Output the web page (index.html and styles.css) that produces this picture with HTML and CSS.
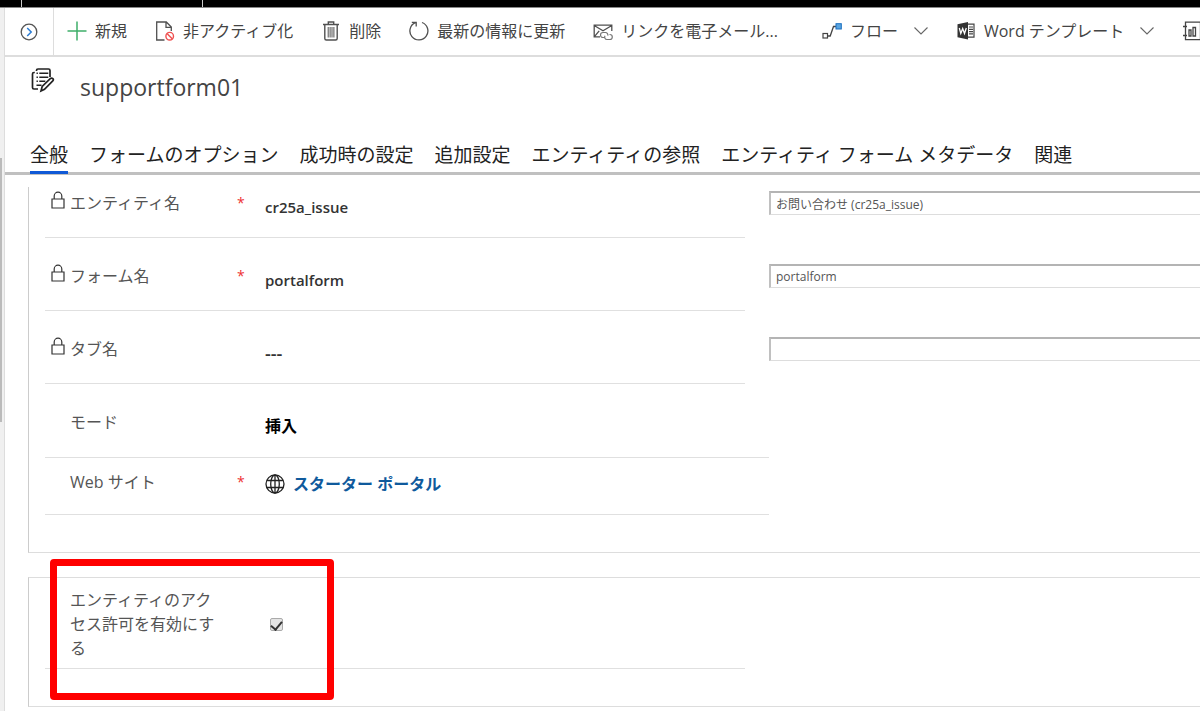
FILE: index.html
```html
<!DOCTYPE html>
<html lang="ja">
<head>
<meta charset="utf-8">
<meta name="viewport" content="width=device-width, initial-scale=1">
<title>supportform01</title>
<link rel="stylesheet" href="styles.css">
</head>
<body>
<div class="topbar"><span class="topbar-cell topbar-first"></span><span class="topbar-cell topbar-second"></span></div>
<div class="shell">
  <div class="rail"></div>
  <main class="page">
    <div class="commandbar">
      <button class="expand" type="button" aria-label="展開">
        <svg width="18" height="18" viewBox="0 0 18 18" fill="none"><circle cx="9" cy="9" r="7.8" stroke="#555" stroke-width="1.3"/><path d="M7.2 5l4 4-4 4" stroke="#2b7cd3" stroke-width="1.5"/></svg>
      </button>
      <div class="commands">
        <button class="command" type="button">
          <svg class="icon" viewBox="0 0 20 20" fill="none"><path d="M10 .5v19M.5 10h19" stroke="#3fae6a" stroke-width="1.5"/></svg>
          <span>新規</span>
        </button>
        <button class="command" type="button">
          <svg class="icon" viewBox="0 0 20 20" fill="none"><path d="M9.500 19H1.700V1h9.600l5 5v4M11 1.200V6.300h5" stroke="#505050" stroke-width="1.300"/><circle cx="14.700" cy="15.200" r="3.800" stroke="#f05050" stroke-width="1.400"/><path d="M12 12.500l5.400 5.400" stroke="#f05050" stroke-width="1.400"/></svg>
          <span>非アクティブ化</span>
        </button>
        <button class="command" type="button">
          <svg class="icon" viewBox="0 0 20 20" fill="none" stroke="#505050"><path d="M2 3.500h16M7.300 3.200V1h5.400v2.200M3.800 3.500v14q0 1.500 1.500 1.500h9.400q1.500 0 1.500-1.500v-14" stroke-width="1.400"/><path d="M7.200 6v10.500M9.100 6v10.500M11 6v10.500M12.900 6v10.500" stroke-width="1"/></svg>
          <span>削除</span>
        </button>
        <button class="command" type="button">
          <svg class="icon" viewBox="0 0 20 20" fill="none" stroke="#505050" stroke-width="1.300"><path d="M13 1.500A9 9 0 1 1 6.300 1.700M2.800 1.300h4.400v4.200"/></svg>
          <span>最新の情報に更新</span>
        </button>
        <button class="command command-last" type="button">
          <svg class="icon" viewBox="0 0 20 20" fill="none" stroke="#505050"><path d="M7 15.800H1.200V4.200h17.600V10M1.200 4.500l8.800 5.300 8.800-5.300M1.200 15.800l5-6" stroke-width="1.300"/><path d="M11.500 16.500H10a2.500 2.500 0 0 1 0-5h2.500a2.500 2.500 0 0 1 2.300 3.200M16.500 13.500h.3a2.500 2.500 0 0 1 0 5H14a2.500 2.500 0 0 1-2-3.800" stroke="#777" stroke-width="1.200"/></svg>
          <span>リンクを電子メール...</span>
        </button>
        <button class="command" type="button">
          <svg class="icon" viewBox="0 0 20 20" fill="none"><rect x="1" y="12.500" width="4.500" height="4.500" stroke="#444" stroke-width="1.200"/><path d="M5.800 15h2.400l3.300-9.500H14" stroke="#444" stroke-width="1.300"/><rect x="14" y="2.700" width="5.300" height="5.300" fill="#5aa5e0" stroke="#1a6fc0"/></svg>
          <span>フロー</span>
          <svg class="chevron" viewBox="0 0 14 8" fill="none"><path d="M.5.500L7 7l6.500-6.500" stroke="#666" stroke-width="1.100"/></svg>
        </button>
        <button class="command" type="button">
          <svg class="icon" viewBox="0 0 20 20" fill="none"><path d="M1.500 3.200L12 1v17.500L1.500 16.300z" fill="#333"/><path d="M12 3.200h6v13h-6M13 6h4M13 8.300h4M13 10.600h4M13 12.900h4" stroke="#444" stroke-width="1.200"/><path d="M3.300 7l1.500 5.500L6.700 7.500l1.800 5L10.300 7" stroke="#fff" stroke-width="1.300"/></svg>
          <span>Word テンプレート</span>
          <svg class="chevron" viewBox="0 0 14 8" fill="none"><path d="M.5.500L7 7l6.500-6.500" stroke="#666" stroke-width="1.100"/></svg>
        </button>
        <button class="command" type="button" aria-label="レポートの実行">
          <svg class="icon" viewBox="0 0 20 20" fill="none" stroke="#444" stroke-width="1.300"><path d="M3.500 1.200h15v17.500h-15zM1 5.500h4M1 14.500h4"/><path d="M7 9h2v6H7zM11 6.500h2.500V15H11z"/></svg>
        </button>
      </div>
    </div>

    <header class="record">
      <svg class="record-icon" viewBox="0 0 24 26" fill="none" stroke="#222" stroke-width="1.700"><path d="M5.500 4V3.500Q5.500 2 7 2h10.500Q19 2 19 3.500V10" /><path d="M3.800 5.500H3Q1.500 5.500 1.500 7v13.500Q1.500 22 3 22h4"/><path d="M5.500 6.300h1.400M8.300 6.300h9M5.500 10.300h1.400M8.300 10.300h9M5.500 14.300h1.400M8.300 14.300h6M5.500 18.200h5" stroke-width="1.500"/><path d="M10 24l1.200-4.500 8.300-8q1.200-1 2.300.1t0 2.200l-8.300 8.500z"/></svg>
      <h1 class="record-title">supportform01</h1>
    </header>

    <nav class="tabs" role="tablist">
      <button class="tab tab-active" type="button" role="tab" aria-selected="true">全般</button>
      <button class="tab" type="button" role="tab">フォームのオプション</button>
      <button class="tab" type="button" role="tab">成功時の設定</button>
      <button class="tab" type="button" role="tab">追加設定</button>
      <button class="tab" type="button" role="tab">エンティティの参照</button>
      <button class="tab" type="button" role="tab">エンティティ フォーム メタデータ</button>
      <button class="tab" type="button" role="tab">関連</button>
    </nav>

    <section class="section section-first">
      <div class="row row-top">
        <div class="field">
          <svg class="lock" viewBox="0 0 14 18" fill="none"><path d="M3.200 8V5a3.800 3.800 0 0 1 7.600 0v3M1 8h12v9H1z" stroke="#333" stroke-width="1.200"/></svg>
          <label class="label" for="entity">エンティティ名</label><span class="required">*</span>
          <span class="value">cr25a_issue</span>
        </div>
        <input class="lookup" id="entity" type="text" value="お問い合わせ (cr25a_issue)">
      </div>
      <div class="row">
        <div class="field">
          <svg class="lock" viewBox="0 0 14 18" fill="none"><path d="M3.200 8V5a3.800 3.800 0 0 1 7.600 0v3M1 8h12v9H1z" stroke="#333" stroke-width="1.200"/></svg>
          <label class="label" for="form">フォーム名</label><span class="required">*</span>
          <span class="value">portalform</span>
        </div>
        <input class="lookup" id="form" type="text" value="portalform">
      </div>
      <div class="row">
        <div class="field">
          <svg class="lock" viewBox="0 0 14 18" fill="none"><path d="M3.200 8V5a3.800 3.800 0 0 1 7.600 0v3M1 8h12v9H1z" stroke="#333" stroke-width="1.200"/></svg>
          <label class="label" for="tab">タブ名</label><span class="required"></span>
          <span class="value value-empty">---</span>
        </div>
        <input class="lookup" id="tab" type="text" value="">
      </div>
      <div class="row row-wide">
        <div class="field">
          <span></span><span class="label">モード</span><span class="required"></span>
          <span class="value value-mode">挿入</span>
        </div>
      </div>
      <div class="row row-wide row-short">
        <div class="field">
          <span></span><span class="label">Web サイト</span><span class="required">*</span>
          <a class="value value-link" href="#">
            <svg class="globe" viewBox="0 0 20 20" fill="none" stroke="#222" stroke-width="1.300"><circle cx="10" cy="10" r="9"/><ellipse cx="10" cy="10" rx="4.300" ry="9"/><path d="M10 1v18M2 6.500h16M2 13.500h16"/></svg>
            <span>スターター ポータル</span>
          </a>
        </div>
      </div>
    </section>

    <section class="section section-access">
      <div class="row row-access">
        <div class="field">
          <span></span><label class="label" for="access">エンティティのアクセス許可を有効にする</label><span class="required"></span>
          <input class="check" id="access" type="checkbox" checked>
        </div>
      </div>
      <div class="highlight"></div>
    </section>
  </main>
</div>
</body>
</html>
```
FILE: styles.css
```css
* { box-sizing: border-box; }

body {
  margin: 0;
  min-height: 100vh;
  display: flex;
  flex-direction: column;
  overflow: hidden;
  background: #fff;
  color: #444;
  font: 16px/24px "Open Sans", "Noto Sans CJK JP", sans-serif;
}

button {
  border: 0;
  padding: 0;
  background: none;
  color: inherit;
  font: inherit;
  white-space: nowrap;
}

svg { display: block; flex: none; }

.topbar { display: flex; height: 8px; background: #000; border-bottom: 1px solid #888; }
.topbar-cell { border-right: 1px solid #ccc; }
.topbar-first { width: 22px; }
.topbar-second { width: 181px; }

.shell { flex: 1; display: flex; }
.rail {
  flex: none;
  width: 5px;
  border-right: 1px solid #ddd;
  background: linear-gradient(#bbb, #bbb) 0 150px / 2px 264px no-repeat #f0f0f0;
}
.page { flex: 1; min-width: 0; }

.commandbar { display: flex; height: 49px; border-bottom: 2px solid #ddd; }
.expand {
  flex: none;
  display: flex;
  align-items: center;
  justify-content: center;
  width: 49px;
  border-right: 1px solid #ddd;
}
.commands { flex: 1; min-width: 0; display: flex; gap: 28px; padding: 0 0 2px 13px; overflow: hidden; }
.command { flex: none; display: flex; align-items: center; gap: 8px; }
.command-last { margin-right: 16px; }
.icon { width: 20px; height: 20px; }
.chevron { width: 14px; height: 8px; margin-left: 8px; }

.record { display: flex; padding: 10px 0 0 26px; gap: 25px; }
.record-icon { width: 24px; height: 26px; }
.record-title { margin: 0; padding-top: 3px; font-size: 23px; line-height: 34px; font-weight: 400; color: #444; }

.tabs {
  display: flex;
  gap: 21px;
  margin-top: 37px;
  padding-left: 25px;
  border-bottom: 3px solid #c0c0c0;
  font-size: 19px;
  line-height: 28px;
  color: #222;
}
.tab { flex: none; padding-bottom: 2px; border-bottom: 3px solid transparent; margin-bottom: -2px; }
.tab-active { border-color: #1059d6; }

.section { margin-left: 23px; border-left: 1px solid #ccc; border-bottom: 1px solid #ddd; padding: 0 0 37px 16px; }
.section-first { margin-top: 12px; }

.row { display: grid; grid-template-columns: 700fr 431fr; column-gap: 24px; padding-top: 26px; min-height: 73px; }
.row-top { padding-top: 4px; min-height: 51px; }
.row-wide { grid-template-columns: 724fr 431fr; column-gap: 0; min-height: 74px; }
.row-short { padding-top: 12px; min-height: 57px; }
.field {
  display: grid;
  grid-template-columns: 25px 152px 43px 1fr;
  align-items: start;
  border-bottom: 1px solid #e0e0e0;
}
.lock { width: 14px; height: 18px; margin-left: 6px; }
.label { color: #555; }
.required { padding-left: 15px; font-size: 14px; color: #e33; }
.value { padding-top: 4px; font-size: 15px; font-weight: 600; color: #333; }
.value-empty { font-size: 18px; }
.value-mode { font-size: 16px; color: #000; font-weight: 700; }
.value-link { display: flex; align-items: center; gap: 8px; padding-top: 2px; font-size: 16px; color: #0f5a9c; font-weight: 700; text-decoration: none; }
.globe { width: 20px; height: 20px; }

.lookup {
  width: 100%;
  height: 24px;
  padding: 0 5px;
  border: 1px solid #ddd;
  border-top: 2px solid #b4b4b4;
  border-left: 2px solid #c0c0c0;
  border-right: 0;
  border-radius: 0;
  background: #fff;
  color: #555;
  font: 12px/20px "Open Sans", "Noto Sans CJK JP", sans-serif;
}

.section-access { position: relative; margin-top: 24px; border-top: 1px solid #ddd; }
.row-access { padding-top: 10px; min-height: 91px; }
.row-access .label { padding-bottom: 8px; }
.check {
  appearance: none;
  align-self: center;
  display: flex;
  justify-content: center;
  width: 13px;
  height: 13px;
  margin: 0 0 8px 5px;
  border: 1px solid #aaa;
  border-radius: 2px;
  background: #e4e4e4;
}
.check:checked::after {
  content: "";
  width: 5px;
  height: 9px;
  border: solid #333;
  border-width: 0 2px 2px 0;
  transform: rotate(40deg);
}
.highlight {
  position: absolute;
  top: -19px;
  left: 21px;
  width: 284px;
  height: 141px;
  border: 7px solid #f00;
  border-radius: 4px;
  pointer-events: none;
}
```
